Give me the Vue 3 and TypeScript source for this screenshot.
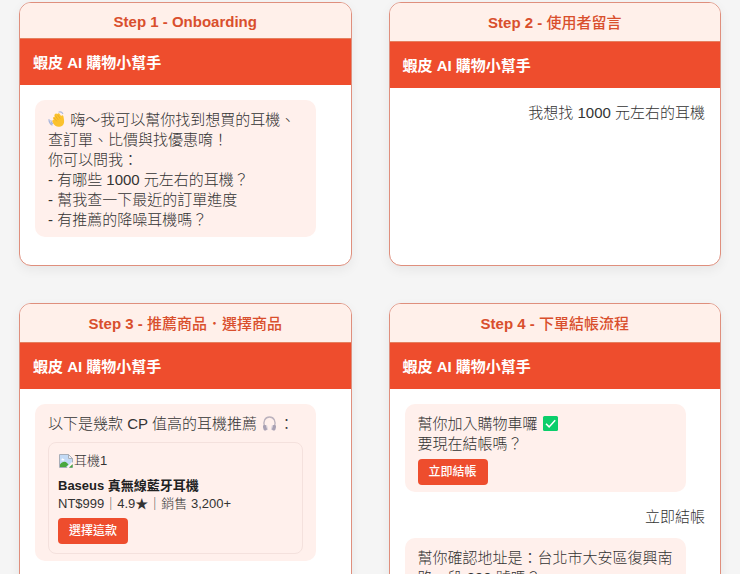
<script setup lang="ts">
interface Product {
  name: string
  alt: string
  price: string
  rating: string
  sold: string
}

interface Message {
  from: 'bot' | 'user'
  lines: string[]
  leading?: 'wave'
  trailing?: 'check' | 'headphones'
  product?: Product
  action?: string
}

interface Step {
  id: number
  title: string
  titleZh?: string
  messages: Message[]
}

const botName = '蝦皮 AI 購物小幫手'

const steps: Step[] = [
  {
    id: 1,
    title: 'Step 1 - Onboarding',
    messages: [
      {
        from: 'bot',
        leading: 'wave',
        lines: [
          '嗨～我可以幫你找到想買的耳機、查訂單、比價與找優惠唷！',
          '你可以問我：',
          '- 有哪些 1000 元左右的耳機？',
          '- 幫我查一下最近的訂單進度',
          '- 有推薦的降噪耳機嗎？',
        ],
      },
    ],
  },
  {
    id: 2,
    title: 'Step 2 -',
    titleZh: '使用者留言',
    messages: [{ from: 'user', lines: ['我想找 1000 元左右的耳機'] }],
  },
  {
    id: 3,
    title: 'Step 3 -',
    titleZh: '推薦商品．選擇商品',
    messages: [
      {
        from: 'bot',
        lines: ['以下是幾款 CP 值高的耳機推薦'],
        trailing: 'headphones',
        product: {
          name: 'Baseus 真無線藍牙耳機',
          alt: '耳機1',
          price: 'NT$999',
          rating: '4.9★',
          sold: '銷售 3,200+',
        },
        action: '選擇這款',
      },
    ],
  },
  {
    id: 4,
    title: 'Step 4 -',
    titleZh: '下單結帳流程',
    messages: [
      {
        from: 'bot',
        lines: ['幫你加入購物車囉', '要現在結帳嗎？'],
        trailing: 'check',
        action: '立即結帳',
      },
      { from: 'user', lines: ['立即結帳'] },
      { from: 'bot', lines: ['幫你確認地址是：台北市大安區復興南路一段 390 號嗎？'] },
    ],
  },
]
</script>

<template>
  <main class="board">
    <section v-for="step in steps" :key="step.id" class="card">
      <h2 class="step" :class="{ latin: !step.titleZh }">
        {{ step.title }} <span v-if="step.titleZh" class="zh">{{ step.titleZh }}</span>
      </h2>
      <header class="bar">{{ botName }}</header>
      <div class="chat">
        <div v-for="(msg, m) in step.messages" :key="m" :class="msg.from">
          <p v-for="(line, i) in msg.lines" :key="i">
            <template v-if="i === 0 && msg.leading === 'wave'">
              <svg class="emoji" viewBox="0 0 17 17" role="img" aria-label="揮手">
                <path d="M7 3c.8-1 1.900-.6 2.300.2.400-1.200 1.900-1.300 2.400-.2l1.500 2.300c.2-1.500 1.900-1.500 2.200-.1.300 2 1 4.200.6 6.500-.500 2.700-2.700 4.300-5.300 4.100-2.500-.2-4.600-1.700-5.700-3.600-.6-1.100-1-2.200-.5-2.800.4-.5 1-.4 1.500-.1-.8-1.100-1.300-2.300-.6-3 .4-.4 1-.3 1.400.1-.5-1.300-.4-2.900.2-3.400z" fill="#fbc22d" />
                <path d="M7.200 4.500l3 4.300M6 6.800l2.800 3.500M9.500 3.600l2.600 4" fill="none" stroke="#e3a11e" stroke-width=".6" />
                <path d="M1 8.500c-.1 2.500 1 4.400 3 5.500M2.900 9.500c.1 1.400.7 2.400 1.700 3.100M11 1c1.600-.4 3 .2 3.700 1.500" fill="none" stroke="#a9b7dc" stroke-width="1.200" stroke-linecap="round" />
              </svg>{{ ' ' }}
            </template>
            {{ line }}
            <template v-if="i === 0 && msg.trailing === 'headphones'">
              <svg class="emoji" viewBox="0 0 17 17" role="img" aria-label="耳機">
                <path d="M3.500 11.500C1.800 6.500 4 2 8.500 2s6.700 4.500 5 9.500" fill="none" stroke="#bbb2bd" stroke-width="1.300" />
                <rect x="2.200" y="10" width="3.600" height="5.500" rx="1.500" fill="#a9a1b3" transform="rotate(-12 4 12.700)" />
                <rect x="11.200" y="10" width="3.600" height="5.500" rx="1.500" fill="#a9a1b3" transform="rotate(12 13 12.700)" />
                <path d="M5.600 10.300l1 4.600M11.400 10.300l-1 4.600" stroke="#d8d2dc" stroke-width="1" />
              </svg>{{ '：' }}
            </template>
            <svg v-if="i === 0 && msg.trailing === 'check'" class="emoji" viewBox="0 0 17 17" role="img" aria-label="完成">
              <rect x="1" y="1" width="15" height="15" rx="1.500" fill="#0bce6b" />
              <path d="M4 8.800l3.100 3.100 6.100-6.600" fill="none" stroke="#fff" stroke-width="1.500" />
            </svg>
          </p>
          <article v-if="msg.product" class="product">
            <div class="photo">
              <svg viewBox="0 0 16 16" width="16" height="16" aria-hidden="true">
                <path d="M1.500 1.500h9l4 4v9h-13z" fill="#fff" stroke="#a8aeb8" />
                <path d="M2 2h8.300v3.700H14V9L9 14H2z" fill="#c3daf5" />
                <path d="M3.500 6.500c0-1 1.500-1.200 1.800-.4 1-.4 1.700 1.200.5 1.400H3.500z" fill="#fff" />
                <path d="M2 14v-2.500c2-2.800 5-3.500 7-1.500l1.500 1.500L8 14z" fill="#49a83e" />
                <path d="M10.500 1.500v4h4z" fill="#eef1f5" stroke="#a8aeb8" />
                <path d="M8 15.500l7.500-7v2L10.500 15.500z" fill="#fff0ec" />
                <path d="M11 14.500h3.500v-3.200z" fill="#49a83e" />
              </svg>
              <span>{{ msg.product.alt }}</span>
            </div>
            <h3>{{ msg.product.name }}</h3>
            <div class="meta">{{ msg.product.price }}｜{{ msg.product.rating }}｜{{ msg.product.sold }}</div>
            <button type="button" class="action">{{ msg.action }}</button>
          </article>
          <button v-else-if="msg.action" type="button" class="action">{{ msg.action }}</button>
        </div>
      </div>
    </section>
  </main>
</template>

<style>
body {
  margin: 0;
  background: #f5f5f5;
}
</style>

<style scoped>
.board {
  display: grid;
  grid-template-columns: 1fr 1fr;
  grid-auto-rows: max-content;
  gap: 37px;
  box-sizing: border-box;
  height: 100vh;
  padding: 2px 19px 37px;
  overflow: auto;
  scrollbar-width: none;
  font-family: "Liberation Sans", "Noto Sans CJK TC", sans-serif;
  font-size: 15px;
  font-weight: 300;
  line-height: 20px;
  color: #333;
}

.card {
  overflow: hidden;
  background: #fff;
  border: 1px solid #df8f7d;
  border-radius: 12px;
  box-shadow: 0 4px 12px rgba(0, 0, 0, 0.06);
}

.step {
  margin: 0;
  padding: 10px 9px 8px;
  border-bottom: 1px solid #e5805f;
  background: #fff0ea;
  color: #d94f2d;
  font-size: 15px;
  font-weight: 700;
  line-height: 20px;
  text-align: center;
}

.step.latin {
  line-height: 17px;
}

.zh {
  font-weight: 500;
}

.bar {
  padding: 14px 13px 12px;
  background: #ee4d2d;
  color: #fff;
  font-weight: 700;
}

.chat {
  padding: 15px 15px 13px;
}

.bot {
  width: 85%;
  margin-bottom: 15px;
  padding: 10px 13px 7px;
  border-radius: 10px;
  background: #fff0ec;
}

.user {
  margin-bottom: 11px;
  text-align: right;
}

p {
  margin: 0;
}

.emoji {
  width: 17px;
  height: 17px;
  margin: 0 1px 0 0;
  vertical-align: -3px;
}

.product {
  margin-top: 8px;
  padding: 9px;
  border: 1px solid #f4e1dd;
  border-radius: 8px;
  font-size: 13px;
  line-height: 18px;
}

.photo {
  display: flex;
  align-items: center;
  margin-bottom: 7px;
}

h3 {
  margin: 0;
  color: #222;
  font-size: 13px;
  font-weight: 700;
}

.action {
  display: block;
  margin-top: 5px;
  padding: 4px 11px;
  border: 0;
  border-radius: 4px;
  background: #ee4d2d;
  color: #fff;
  font-family: inherit;
  font-size: 12px;
  font-weight: 500;
  line-height: 18px;
}
</style>
